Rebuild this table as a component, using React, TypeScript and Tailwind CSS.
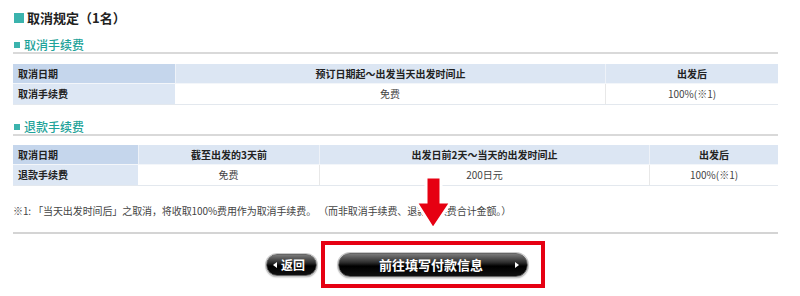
import React from "react";

const Tri = ({ dir }: { dir: "l" | "r" }) => (
  <svg width="4" height="6" viewBox="0 0 4 6" className="shrink-0">
    {dir === "l" ? <polygon points="4,0 4,6 0,3" fill="#fff" /> : <polygon points="0,0 0,6 4,3" fill="#fff" />}
  </svg>
);

export default function App() {
  const btn =
    "flex items-center rounded-full border border-[#666] shadow-[0_0_0_1px_#c8c8c8,0_1px_2px_rgba(0,0,0,0.4)] bg-[linear-gradient(to_bottom,#7a7a7a_0%,#2a2a2a_40%,#000_55%,#111_100%)] text-white font-bold";
  return (
    <div className="relative w-[800px] h-[296px] bg-white overflow-hidden font-['Noto_Sans_CJK_SC',sans-serif] text-[#333]">
      <div className="pl-[13px] pr-[22px]">
        {/* title */}
        <div className="mt-[11px] flex items-center h-[14px] gap-[3px]">
          <div className="ml-[1px] w-[10px] h-[10px] bg-[#3bb3ad]" />
          <span className="text-[13px] font-bold leading-[14px] text-[#222]">取消规定（1名）</span>
        </div>

        {/* subtitle 1 */}
        <div className="mt-[13px] flex items-center h-[16px] gap-[4px] border-b-2 border-[#d9d9d9]">
          <div className="ml-[1px] w-[6px] h-[6px] bg-[#3bb3ad]" />
          <span className="text-[12px] leading-[14px] font-medium text-[#1fa39a]">取消手续费</span>
        </div>

        {/* table 1 */}
        <div className="mt-[10px] text-[10px] leading-[12px] border-b border-[#e3e8ee]">
          <div className="flex h-[20px] bg-[#dce6f3] font-bold text-[#222] border-b border-[#f3f6fa]">
            <div className="w-[162px] bg-[#c5d6ec] flex items-center pl-[5px]">取消日期</div>
            <div className="w-[430px] flex items-center justify-center border-l border-[#eef2f8]">预订日期起～出发当天出发时间止</div>
            <div className="flex-1 flex items-center justify-center border-l border-[#eef2f8]">出发后</div>
          </div>
          <div className="flex h-[20px]">
            <div className="w-[162px] bg-[#dde7f4] flex items-center pl-[5px] font-bold text-[#222]">取消手续费</div>
            <div className="w-[430px] flex items-center justify-center text-[#444]">免费</div>
            <div className="flex-1 flex items-center justify-center border-l border-[#e8e8e8] text-[#444]">100%(※1)</div>
          </div>
        </div>

        {/* subtitle 2 */}
        <div className="mt-[15px] flex items-center h-[16px] gap-[4px] border-b-2 border-[#d9d9d9]">
          <div className="ml-[1px] w-[6px] h-[6px] bg-[#3bb3ad]" />
          <span className="text-[12px] leading-[14px] font-medium text-[#1fa39a]">退款手续费</span>
        </div>

        {/* table 2 */}
        <div className="mt-[9px] text-[10px] leading-[12px] border-b border-[#e3e8ee]">
          <div className="flex h-[20px] bg-[#dce6f3] font-bold text-[#222] border-b border-[#f3f6fa]">
            <div className="w-[125px] bg-[#c5d6ec] flex items-center pl-[5px]">取消日期</div>
            <div className="w-[181px] flex items-center justify-center border-l border-[#eef2f8]">截至出发的3天前</div>
            <div className="w-[330px] flex items-center justify-center border-l border-[#eef2f8]">出发日前2天～当天的出发时间止</div>
            <div className="flex-1 flex items-center justify-center border-l border-[#eef2f8]">出发后</div>
          </div>
          <div className="flex h-[20px]">
            <div className="w-[125px] bg-[#dde7f4] flex items-center pl-[5px] font-bold text-[#222]">退款手续费</div>
            <div className="w-[181px] flex items-center justify-center text-[#444]">免费</div>
            <div className="w-[330px] flex items-center justify-center border-l border-[#e8e8e8] text-[#444]">200日元</div>
            <div className="flex-1 flex items-center justify-center border-l border-[#e8e8e8] text-[#444]">100%(※1)</div>
          </div>
        </div>

        {/* footnote */}
        <div className="mt-[18px] h-[14px] text-[10px] leading-[14px] tracking-[-0.1px] text-[#444] whitespace-nowrap">
          ※1: 「当天出发时间后」之取消，将收取100%费用作为取消手续费。 （而非取消手续费、退款手续费合计金额。）
        </div>

        {/* divider */}
        <div className="mt-[14px] border-t-2 border-[#d4d4d4]" />

        {/* buttons */}
        <div className="mt-[7px] flex items-center pl-[253px] gap-[4px]">
          <div className={`${btn} w-[51px] h-[22px] pl-[6px] gap-[4px] text-[12px] leading-[12px]`}>
            <Tri dir="l" />
            <span>返回</span>
          </div>
          <div className="w-[224px] h-[47px] border-4 border-[#e60012] flex items-center justify-center">
            <div className={`${btn} w-[190px] h-[24px] pl-[40px] pr-[8px] justify-between text-[13px] leading-[13px]`}>
              <span>前往填写付款信息</span>
              <Tri dir="r" />
            </div>
          </div>
        </div>
      </div>

      {/* red arrow overlay */}
      <svg className="absolute left-[414px] top-[175px]" width="40" height="57" viewBox="0 0 40 57">
        <polygon
          points="12,2 27,2 27,27 37,27 19,54 2,27 12,27"
          fill="#e60012"
          stroke="#fff"
          strokeWidth="3"
          strokeLinejoin="miter"
        />
      </svg>
    </div>
  );
}
